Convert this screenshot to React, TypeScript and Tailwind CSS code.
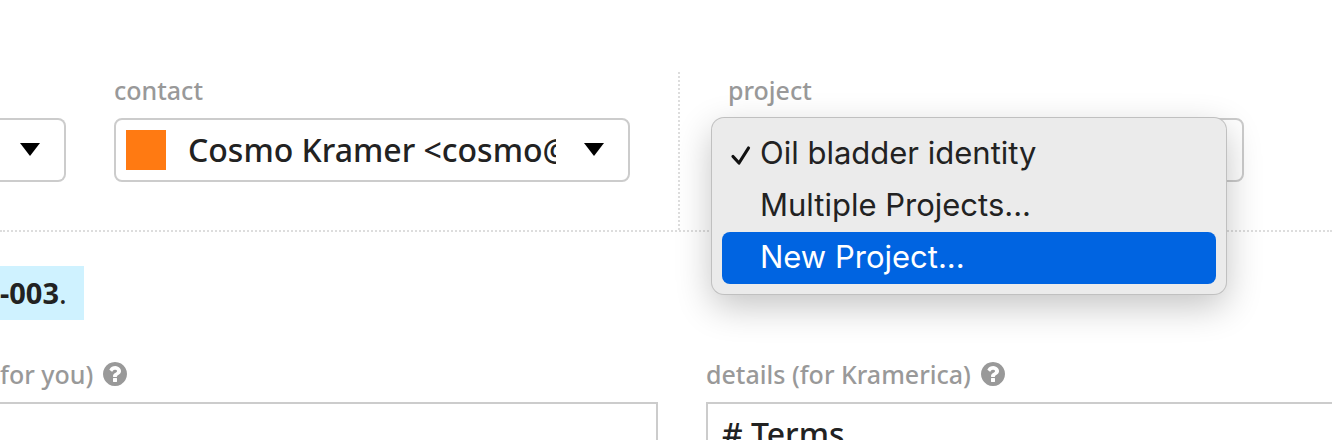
import type { ReactNode } from "react";

const labelClass = "text-[25px] leading-8 font-medium text-[#999]";
const selectClass =
  "block h-16 w-full appearance-none overflow-hidden rounded-lg border-2 border-[#ccc] bg-white text-[32px] leading-10 font-medium text-[#222]";

function Caret() {
  return (
    <svg
      className="pointer-events-none absolute top-[25px] right-[26px]"
      width="20"
      height="13"
      viewBox="0 0 20 13"
      aria-hidden="true"
    >
      <path d="M0 0h20L10 13z" fill="#000" />
    </svg>
  );
}

function HelpIcon() {
  return (
    <svg width="24" height="24" viewBox="128 128 1536 1536" aria-hidden="true">
      <path
        fill="#999"
        d="M1024 1376v-192q0-14-9-23t-23-9h-192q-14 0-23 9t-9 23v192q0 14 9 23t23 9h192q14 0 23-9t9-23zm256-672q0-88-55.500-163t-138.500-116-170-41q-243 0-371 213-15 24 8 42l132 100q7 6 19 6 16 0 25-12 53-68 86-92 34-24 86-24 48 0 85.500 26t37.500 59q0 38-20 61t-68 45q-63 28-115.500 86.500t-52.500 125.500v36q0 14 9 23t23 9h192q14 0 23-9t9-23q0-19 21.500-49.500t54.500-49.500q32-18 49-28.500t46-35 44.500-48 28-60.500 12.500-81zm384 192q0 209-103 385.500t-279.500 279.500-385.500 103-385.500-103-279.500-279.500-103-385.500 103-385.500 279.500-279.500 385.500-103 385.500 103 279.500 279.500 103 385.500z"
      />
    </svg>
  );
}

function FieldLabel({ id, children }: { id: string; children: ReactNode }) {
  return (
    <div className="flex items-center gap-[10px]">
      <label htmlFor={id} className={labelClass}>
        {children}
      </label>
      <button type="button" aria-label="Help" className="flex">
        <HelpIcon />
      </button>
    </div>
  );
}

function MenuItem({ children, checked, active }: { children: ReactNode; checked?: boolean; active?: boolean }) {
  return (
    <li role="option" aria-selected={!!checked}>
      <button
        type="button"
        className={
          active
            ? "flex h-13 w-full items-center rounded-lg bg-[#0064e1] pb-[3px] pl-2 text-left text-white"
            : "flex h-13 w-full items-center rounded-lg pb-[3px] pl-2 text-left text-[#222]"
        }
      >
        <span className="flex w-[30px] shrink-0 pt-1">
          {checked && (
            <svg width="22" height="22" viewBox="0 0 22 22" fill="none" aria-hidden="true">
              <path
                d="M3 12.500l6 6.500L18.500 4"
                stroke="#111"
                strokeWidth="3.200"
                strokeLinecap="round"
                strokeLinejoin="round"
              />
            </svg>
          )}
        </span>
        {children}
      </button>
    </li>
  );
}

export default function App() {
  return (
    <main className="h-screen overflow-hidden bg-white pt-[72px] font-['Noto_Sans',sans-serif] text-[#222]">
      <section className="grid grid-cols-[680fr_652fr] border-b-2 border-dotted border-[#ddd]">
        <div className="flex gap-12 border-r-2 border-dotted border-[#ddd] pr-12 pb-12">
          <div className="relative w-[66px] shrink-0 pt-[46px]">
            <div className="relative">
              <select
                aria-label="client"
                className="block h-16 w-full appearance-none rounded-r-lg border-2 border-l-0 border-[#ccc] bg-white"
              />
              <Caret />
            </div>
          </div>
          <div className="min-w-0 flex-1">
            <label htmlFor="contact" className={`${labelClass} mt-[2px] mb-3 block`}>
              contact
            </label>
            <div className="relative">
              <select id="contact" className={`${selectClass} pr-[72px] pl-[72px]`}>
                <option>Cosmo Kramer &lt;cosmo@kramerica.com&gt;</option>
              </select>
              <span className="pointer-events-none absolute top-3 left-3 size-10 bg-[#ff7a12]" />
              <Caret />
            </div>
          </div>
        </div>
        <div className="pr-[88px] pb-12 pl-12">
          <label htmlFor="project" className={`${labelClass} mt-[2px] mb-3 block`}>
            project
          </label>
          <div className="relative">
            <select id="project" className={`${selectClass} pr-[72px] pl-5`}>
              <option>Oil bladder identity</option>
            </select>
            <Caret />
            <ul
              role="listbox"
              aria-label="project"
              className="absolute top-0 right-[18px] -left-4 z-10 rounded-xl bg-[#ebebeb] p-[10px] font-[Inter,sans-serif] text-[31px] leading-10 shadow-[0_0_0_1px_#c0c0c0,0_12px_36px_rgba(0,0,0,0.24)]"
            >
              <MenuItem checked>Oil bladder identity</MenuItem>
              <MenuItem>Multiple Projects...</MenuItem>
              <MenuItem active>New Project...</MenuItem>
            </ul>
          </div>
        </div>
      </section>

      <p className="mt-[34px] flex h-[54px] w-fit items-center bg-[#cff2ff] pr-[17px] text-[29px] leading-10">
        <strong>-003</strong>.
      </p>

      <section className="mt-[38px] grid grid-cols-[658fr_626fr] gap-12">
        <div>
          <FieldLabel id="notes">for you)</FieldLabel>
          <textarea
            id="notes"
            className="mt-3 block h-40 w-full resize-none border-2 border-l-0 border-[#ccc] bg-white p-4"
          />
        </div>
        <div>
          <FieldLabel id="details">details (for Kramerica)</FieldLabel>
          <textarea
            id="details"
            defaultValue="# Terms"
            className="mt-3 block h-40 w-full resize-none border-2 border-r-0 border-[#ccc] bg-white px-[14px] py-[10px] text-[32px] leading-10 font-medium"
          />
        </div>
      </section>
    </main>
  );
}
